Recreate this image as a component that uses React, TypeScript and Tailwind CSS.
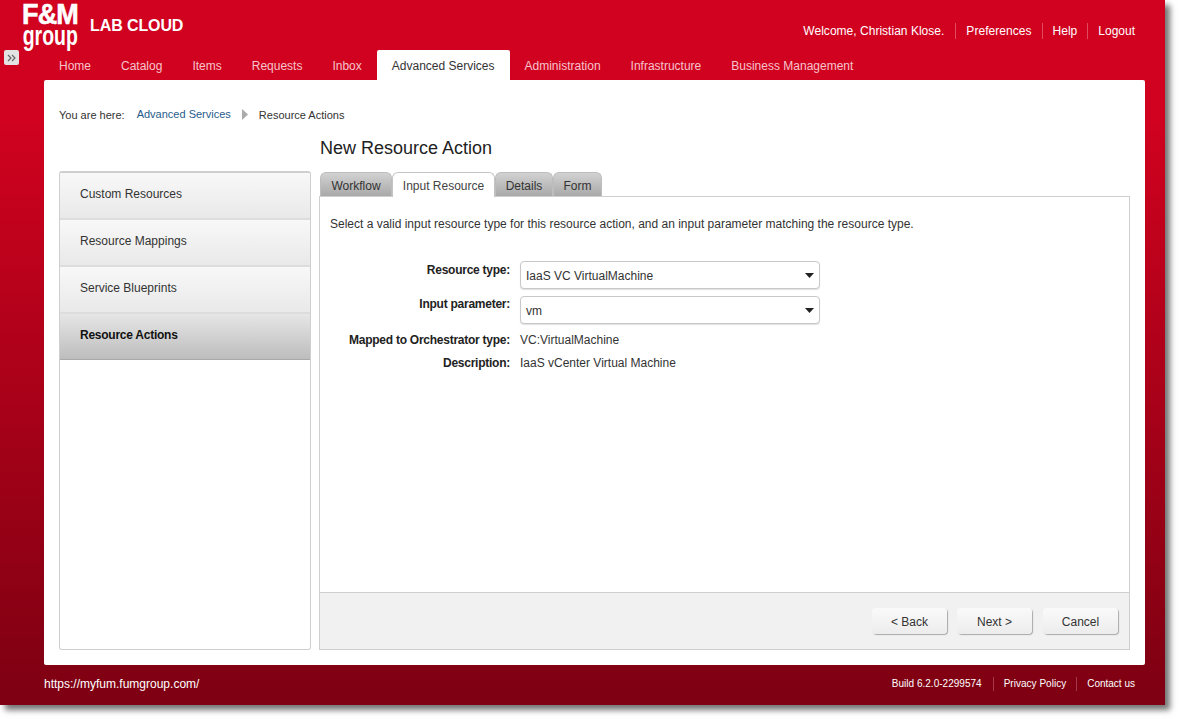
import React from "react";

const nav = ["Home", "Catalog", "Items", "Requests", "Inbox", "Advanced Services", "Administration", "Infrastructure", "Business Management"];
const side = ["Custom Resources", "Resource Mappings", "Service Blueprints"];
const tabs = ["Workflow", "Input Resource", "Details", "Form"];

function Select({ value }: { value: string }) {
  return (
    <div className="flex h-[28px] w-[300px] items-center justify-between rounded-[4px] border border-[#c8c8c8] bg-white pl-[5px] pr-[5px] text-[12px] text-[#333] shadow-[0_1px_1px_rgba(0,0,0,0.12)]">
      <span className="pt-[1px]">{value}</span>
      <svg width="9" height="5" viewBox="0 0 9 5"><path d="M0 0h9L4.5 5z" fill="#222" /></svg>
    </div>
  );
}

function Btn({ label, cls }: { label: string; cls?: string }) {
  return (
    <div className={`flex h-[26px] w-[75px] items-center justify-center rounded-[4px] bg-gradient-to-b from-[#fafafa] to-[#ececec] pt-[1px] text-[12px] text-[#333] shadow-[1px_1px_1px_rgba(0,0,0,0.3)] ${cls ?? ""}`}>
      {label}
    </div>
  );
}

export default function App() {
  return (
    <div className="h-[720px] w-[1180px] overflow-hidden bg-white font-['Liberation_Sans',Arial,sans-serif]">
      <div className="flex h-[705px] w-[1165px] flex-col bg-[linear-gradient(to_bottom,#d0021f_0%,#d0021f_17%,#7f0012_98%,#7f0012_100%)] shadow-[5px_5px_6px_rgba(0,0,0,0.55)]">
        {/* header */}
        <div className="flex h-[50px] items-start">
          <div className="flex w-[22px] shrink-0" />
          <div className="flex w-[56px] shrink-0 flex-col items-center text-white">
            <div className="mt-[2px] h-[24px] scale-x-[0.9] text-[30px] font-bold leading-[24px] tracking-[-1px] [-webkit-text-stroke:0.6px_white]">F&amp;M</div>
            <div className="h-[22px] scale-x-[0.72] text-[27px] font-bold leading-[20px]">group</div>
          </div>
          <div className="ml-[12px] mt-[17px] text-[16px] font-bold leading-[18px] tracking-[-0.1px] text-white">LAB CLOUD</div>
          <div className="ml-auto mr-[30px] mt-[23px] flex items-center text-[12px] leading-[16px] text-white">
            <span className="pr-[11px] tracking-[0.02px]">Welcome, Christian Klose.</span>
            <span className="border-l border-[#e04a5e] pl-[10px] pr-[10px] tracking-[0.05px]">Preferences</span>
            <span className="border-l border-[#e04a5e] px-[10px]">Help</span>
            <span className="border-l border-[#e04a5e] pl-[10px]">Logout</span>
          </div>
        </div>
        {/* nav */}
        <div className="flex h-[30px] items-stretch">
          <div className="flex w-[44px] shrink-0 items-start pl-[4px]">
            <div className="flex h-[15px] w-[15px] items-center justify-center rounded-[2px] bg-[#e3e3e3]">
              <svg width="10" height="8" viewBox="0 0 10 8" fill="none" stroke="#666" strokeWidth="1.2"><path d="M1 1l3 3-3 3M5 1l3 3-3 3" /></svg>
            </div>
          </div>
          {nav.map((n) =>
            n === "Advanced Services" ? (
              <div key={n} className="flex items-center rounded-t-[2px] bg-white px-[15px] pt-[1px] text-[12px] text-[#333]">{n}</div>
            ) : (
              <div key={n} className="flex items-center px-[15px] pt-[1px] text-[12px] text-[#f6c4cb]">{n}</div>
            )
          )}
        </div>
        {/* body */}
        <div className="ml-[44px] mr-[20px] flex h-[585px] flex-col rounded-[2px] bg-white px-[15px] pb-[15px]">
          <div className="flex h-[50px] items-center pt-[18px] text-[11px] text-[#333]">
            <span className="pt-[2px]">You are here:</span>
            <span className="ml-[12px] text-[#1f5c8a]">Advanced Services</span>
            <svg className="ml-[11px]" width="6" height="11" viewBox="0 0 6 11"><path d="M0 0l6 5.5L0 11z" fill="#aaa" /></svg>
            <span className="ml-[11px] pt-[2px]">Resource Actions</span>
          </div>
          <div className="flex min-h-0 flex-1 gap-[8px]">
            <div className="mt-[41px] flex w-[252px] flex-col overflow-hidden rounded-[3px] border border-t-2 border-[#cfcfcf]">
              {side.map((s) => (
                <div key={s} className="flex h-[47px] items-center border-b-2 border-[#dddddd] bg-gradient-to-b from-[#f8f8f8] to-[#e9e9e9] pb-[4px] pl-[20px] text-[12px] text-[#333]">{s}</div>
              ))}
              <div className="flex h-[46px] items-center border-b border-[#a8a8a8] bg-gradient-to-b from-[#e6e6e6] to-[#bdbdbd] pb-[4px] pl-[20px] text-[12px] font-bold tracking-[-0.25px] text-[#111]">Resource Actions</div>
            </div>
            <div className="flex min-w-0 flex-1 flex-col">
              <div className="flex h-[37px] items-center pb-[2px] pl-[1px] text-[18px] leading-[20px] text-[#222]">New Resource Action</div>
              <div className="relative z-10 mt-[5px] flex h-[24px] pl-[1px]">
                {tabs.map((t) =>
                  t === "Input Resource" ? (
                    <div key={t} className="flex h-[25px] w-[103px] items-center justify-center rounded-t-[6px] border border-b-0 border-[#c4c4c4] bg-white pt-[2px] text-[12px] text-[#444]">{t}</div>
                  ) : (
                    <div key={t} className={`flex h-[24px] items-center justify-center rounded-t-[6px] border border-b-0 border-[#bdbdbd] bg-gradient-to-b from-[#d2d2d2] to-[#a9a9a9] pt-[2px] text-[12px] text-[#333] ${t === "Workflow" ? "w-[72px]" : t === "Details" ? "w-[58px]" : "w-[49px]"}`}>{t}</div>
                  )
                )}
              </div>
              <div className="flex min-h-0 flex-1 flex-col border border-[#cfcfcf]">
                <div className="flex-1 px-[10px] pt-[20px] text-[12px] text-[#333]">
                  <div className="leading-[14px]">Select a valid input resource type for this resource action, and an input parameter matching the resource type.</div>
                  <div className="mt-[30px] grid grid-cols-[180px_300px] items-center gap-x-[10px]">
                    <div className="h-[28px] pt-[2px] text-right font-bold leading-[14px] tracking-[-0.25px] text-[#222]">Resource type:</div>
                    <Select value="IaaS VC VirtualMachine" />
                    <div className="mt-[7px] h-[28px] pt-[1px] text-right font-bold leading-[14px] tracking-[-0.25px] text-[#222]">Input parameter:</div>
                    <div className="mt-[7px]"><Select value="vm" /></div>
                    <div className="mt-[9px] text-right font-bold leading-[14px] tracking-[-0.25px] text-[#222]">Mapped to Orchestrator type:</div>
                    <div className="mt-[9px] leading-[14px]">VC:VirtualMachine</div>
                    <div className="mt-[9px] text-right font-bold leading-[14px] tracking-[-0.25px] text-[#222]">Description:</div>
                    <div className="mt-[9px] leading-[14px]">IaaS vCenter Virtual Machine</div>
                  </div>
                </div>
                <div className="flex h-[57px] items-center justify-end gap-[10px] border-t border-[#cfcfcf] bg-[#f1f1f1] pr-[11px]">
                  <Btn label="&lt; Back" />
                  <Btn label="Next &gt;" />
                  <Btn label="Cancel" cls="ml-[1px]" />
                </div>
              </div>
            </div>
          </div>
        </div>
        {/* footer */}
        <div className="flex h-[40px] items-center pb-[2px] pl-[44px] pr-[30px] text-white">
          <span className="text-[12px]">https://myfum.fumgroup.com/</span>
          <div className="ml-auto flex items-center text-[10px] leading-[14px]">
            <span className="pr-[11px] tracking-[0.02px]">Build 6.2.0-2299574</span>
            <span className="border-l border-[#a5384a] pl-[10px] pr-[10px] tracking-[0.02px]">Privacy Policy</span>
            <span className="border-l border-[#a5384a] pl-[10px]">Contact us</span>
          </div>
        </div>
      </div>
    </div>
  );
}
